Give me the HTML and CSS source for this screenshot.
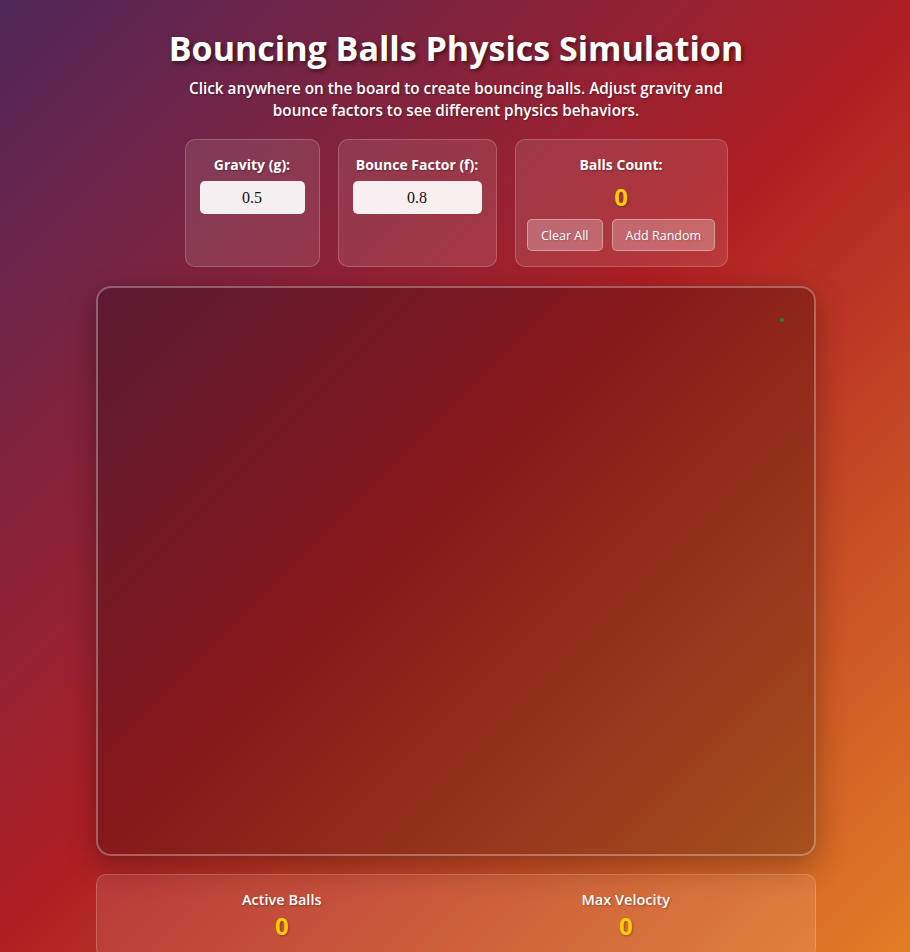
FILE: index.html
```html
<!DOCTYPE html>
<html lang="en">
<head>
<meta charset="utf-8">
<title>Bouncing Balls Physics Simulation</title>
<link rel="stylesheet" href="styles.css">
</head>
<body>
<div class="container">
  <header class="header">
    <h1 class="title">Bouncing Balls Physics Simulation</h1>
    <p class="subtitle">Click anywhere on the board to create bouncing balls. Adjust gravity and<br>bounce factors to see different physics behaviors.</p>
  </header>

  <div class="controls">
    <div class="control control-gravity">
      <label class="control-label" for="gravity">Gravity (g):</label>
      <input class="control-input" id="gravity" type="text" value="0.5">
    </div>
    <div class="control control-bounce">
      <label class="control-label" for="bounce">Bounce Factor (f):</label>
      <input class="control-input" id="bounce" type="text" value="0.8">
    </div>
    <div class="control control-count">
      <div class="control-label">Balls Count:</div>
      <div class="count-value">0</div>
      <div class="btn-row">
        <button class="btn" type="button">Clear All</button>
        <button class="btn" type="button">Add Random</button>
      </div>
    </div>
  </div>

  <div class="board">
    <span class="ball"></span>
  </div>

  <div class="stats">
    <div class="stat">
      <div class="stat-label">Active Balls</div>
      <div class="stat-value">0</div>
    </div>
    <div class="stat">
      <div class="stat-label">Max Velocity</div>
      <div class="stat-value">0</div>
    </div>
  </div>
</div>
</body>
</html>
```

FILE: styles.css
```css
html {
  height: 100%;
  background: linear-gradient(135deg, #50275a 0%, #ae1f23 50%, #e27d26 100%);
}

body {
  margin: 0;
  padding: 0 0 20px 2px;
  color: #ffffff;
  font-family: "Open Sans", "DejaVu Sans", sans-serif;
  text-shadow: 1px 1px 2px rgba(0, 0, 0, 0.3);
}

.container {
  max-width: 720px;
  margin: 0 auto;
  padding-top: 24px;
}

.header {
  text-align: center;
}

.title {
  margin: 0;
  font-size: 34px;
  line-height: 48px;
  font-weight: 700;
  text-shadow: 2px 2px 4px rgba(0, 0, 0, 0.5);
}

.subtitle {
  margin: 5px 0 0;
  font-size: 15.3px;
  line-height: 22px;
  font-weight: 600;
}

.controls {
  display: flex;
  justify-content: center;
  gap: 18px;
  margin: 18px 0 19px;
}

.control {
  box-sizing: border-box;
  display: flex;
  flex-direction: column;
  align-items: center;
  padding: 15px 14px;
  background: rgba(255, 255, 255, 0.1);
  border: 1px solid rgba(255, 255, 255, 0.2);
  border-radius: 10px;
}

.control-gravity { width: 135px; }
.control-bounce { width: 159px; }
.control-count { width: 213px; padding: 15px 12px; }

.control-label {
  font-size: 14px;
  line-height: 19px;
  font-weight: 700;
  margin-bottom: 7px;
  white-space: nowrap;
}

.control-input {
  box-sizing: border-box;
  width: 100%;
  height: 33px;
  border: none;
  border-radius: 5px;
  background: rgba(255, 255, 255, 0.92);
  color: #111111;
  font-family: "Liberation Serif", serif;
  font-size: 16px;
  text-align: center;
  padding: 0;
  outline: none;
}

.count-value {
  font-size: 24px;
  line-height: 32px;
  font-weight: 700;
  color: #ffcc00;
  margin-bottom: 6px;
}

.btn-row {
  display: flex;
  justify-content: center;
  gap: 9px;
}

.btn {
  flex-shrink: 0;
  white-space: nowrap;
  height: 32px;
  padding: 0 13px;
  font-family: "Open Sans", "DejaVu Sans", sans-serif;
  font-size: 12.5px;
  color: #ffffff;
  text-shadow: 1px 1px 2px rgba(0, 0, 0, 0.2);
  background: rgba(255, 255, 255, 0.25);
  border: 1px solid rgba(255, 255, 255, 0.35);
  border-radius: 5px;
  cursor: pointer;
}

.board {
  position: relative;
  box-sizing: border-box;
  height: 570px;
  border: 2px solid rgba(255, 255, 255, 0.3);
  border-radius: 15px;
  background: rgba(0, 0, 0, 0.23);
  box-shadow: 0 10px 30px rgba(0, 0, 0, 0.3);
}

.ball {
  position: absolute;
  left: 682px;
  top: 30px;
  width: 4px;
  height: 4px;
  border-radius: 50%;
  background: #0b8a52;
}

.stats {
  margin-top: 18px;
  display: flex;
  justify-content: space-around;
  padding: 15px;
  background: rgba(255, 255, 255, 0.1);
  border: 1px solid rgba(255, 255, 255, 0.2);
  border-radius: 10px;
  text-align: center;
}

.stat-label {
  font-size: 14.5px;
  line-height: 20px;
  font-weight: 600;
}

.stat-value {
  font-size: 24px;
  line-height: 32px;
  font-weight: 700;
  color: #ffcc00;
}
```
